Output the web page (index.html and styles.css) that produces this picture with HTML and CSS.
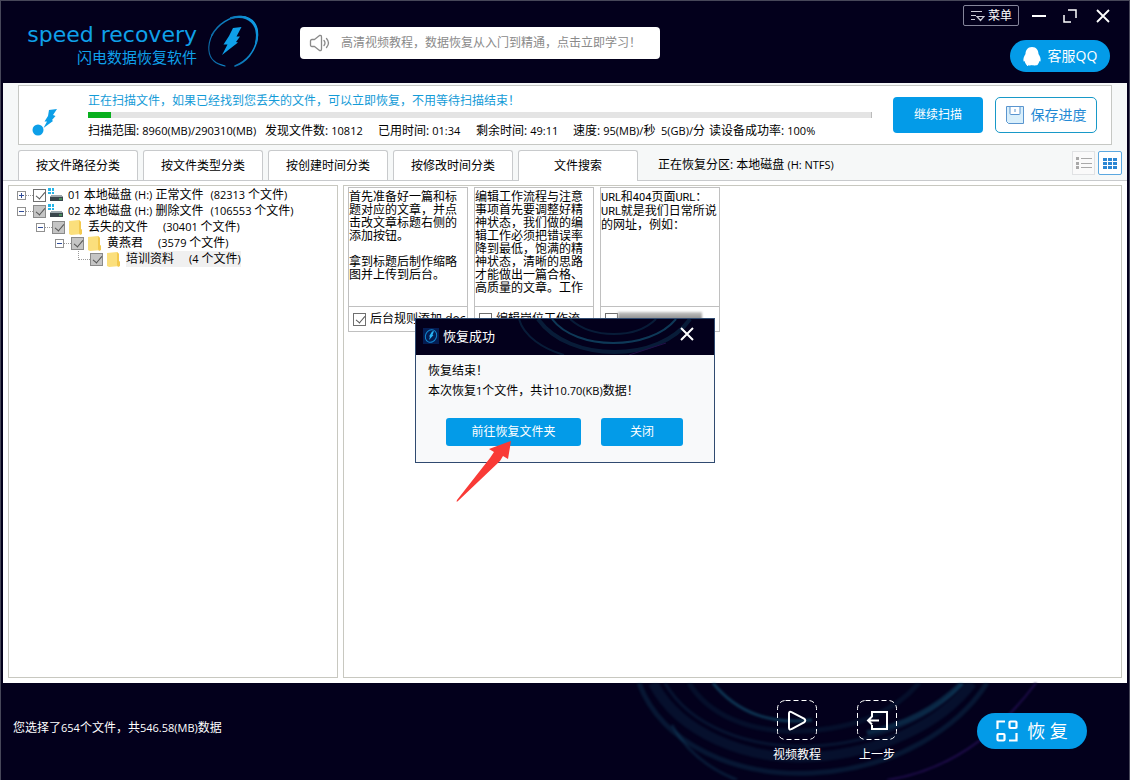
FILE: index.html
```html
<!DOCTYPE html>
<html lang="zh-CN">
<head>
<meta charset="utf-8">
<title>闪电数据恢复软件</title>
<link rel="stylesheet" href="styles.css">
</head>
<body>
<div class="window">
  <header class="header">
    <div class="brand">
      <div class="brand-text">
        <div class="brand-en">speed recovery</div>
        <div class="brand-cn">闪电数据恢复软件</div>
      </div>
      <svg class="brand-mark" width="54" height="54" viewBox="0 0 54 54">
        <defs>
          <linearGradient id="ring" x1="0" y1="0.8" x2="1" y2="0.2">
            <stop offset="0" stop-color="#0b5d96"/>
            <stop offset="1" stop-color="#0fa0ea"/>
          </linearGradient>
        </defs>
        <g fill="none" stroke="url(#ring)" stroke-linecap="round">
          <path d="M5 20C11 9 23 1.500 34 1.500C46 2 52 11 50 24C48 37 39 47 28 51" stroke-width="1.600"/>
          <path d="M24 3C32 1 40 2 45 7C50 12 51 20 49 28" stroke-width="2.200"/>
          <path d="M5 20C0 31 1 41 7 46C10 49 14 50 18 51" stroke-width="1.100"/>
        </g>
        <path d="M26 13L34.500 12L29.500 21.500H33L29 27L31 27.500L15 40L20.500 29.500H16.500L22 21Z" fill="#0fa0ea"/>
      </svg>
    </div>
    <a class="notice" href="#">
      <svg width="22" height="18" viewBox="0 0 22 18" fill="none" stroke="#8a8a8a" stroke-width="1.300" stroke-linejoin="round" stroke-linecap="round">
        <path d="M3 5.500H5.500L10.500 1.500Q12.500 1 12.500 3V15Q12.500 17 10.500 16.500L5.500 12.500H3Q1.500 12.500 1.500 11V7Q1.500 5.500 3 5.500Z"/>
        <path d="M15 6.500Q17 9 15 11.500M17.500 4.500Q21.500 9 17.500 13.500"/>
      </svg>
      <span>高清视频教程，数据恢复从入门到精通，点击立即学习！</span>
    </a>
    <div class="header-right">
      <div class="window-controls">
        <button class="menu-button" type="button">
          <svg width="15" height="12" viewBox="0 0 15 12" fill="none" stroke="#c9c9d4" stroke-width="1.200">
            <path d="M1 1.500H12M1 5.500H6M1 9.500H5M7 6.500H14L10.500 10.500Z"/>
          </svg>
          <span>菜单</span>
        </button>
        <button class="control" type="button" aria-label="最小化">
          <svg width="14" height="14" viewBox="0 0 14 14"><path d="M0 7H14" stroke="#fff" stroke-width="2"/></svg>
        </button>
        <button class="control" type="button" aria-label="最大化">
          <svg width="14" height="14" viewBox="0 0 14 14" fill="none" stroke="#fff" stroke-width="1.500"><path d="M5 1H13V9M1 6V13H8"/></svg>
        </button>
        <button class="control" type="button" aria-label="关闭窗口">
          <svg width="14" height="14" viewBox="0 0 14 14"><path d="M1 1L13 13M13 1L1 13" stroke="#fff" stroke-width="1.800"/></svg>
        </button>
      </div>
      <button class="service" type="button">
        <svg width="18" height="19" viewBox="0 0 18 19" fill="#fff"><path d="M9 0C13.500 0 15.500 3.500 15.500 7C17 9 18 12 17.500 14C17.300 15 16.500 14.500 16 14C16.300 15.500 15.500 16.500 15 17C15 19 10 18.500 9 18C8 18.500 3 19 3 17C2.500 16.500 1.700 15.500 2 14C1.500 14.500 .7 15 .5 14C0 12 1 9 2.500 7C2.500 3.500 4.500 0 9 0Z"/></svg>
        <span>客服QQ</span>
      </button>
    </div>
  </header>

  <main class="content">
    <section class="scan">
      <svg class="scan-icon" width="28" height="28" viewBox="0 0 28 28" fill="#0d9fe8">
        <circle cx="6" cy="22" r="5.500"/>
        <path d="M17 2L25 1L21 7L23.500 8L20 12L21 13L11.500 20L15 13.500H12.500L16 8Z"/>
      </svg>
      <div class="scan-info">
        <div class="scan-title">正在扫描文件，如果已经找到您丢失的文件，可以立即恢复，不用等待扫描结束！</div>
        <div class="progress"><div class="progress-fill" style="width:3%"></div></div>
        <div class="stats">
          <span>扫描范围: <span class="num">8960(MB)/290310(MB)</span></span>
          <span>发现文件数: <span class="num">10812</span></span>
          <span>已用时间: <span class="num">01:34</span></span>
          <span>剩余时间: <span class="num">49:11</span></span>
          <span>速度: <span class="num">95(MB)/</span>秒</span>
          <span><span class="num">5(GB)/</span>分</span>
          <span>读设备成功率: <span class="num">100%</span></span>
        </div>
      </div>
      <button class="scan-button" type="button">继续扫描</button>
      <button class="save-button" type="button">
        <svg width="18" height="18" viewBox="0 0 18 18" fill="#d9effb" stroke="#5a95cf"><path d="M.5 .5H17.500V17.500H2.500L.5 15.500Z"/><path d="M4 1V7.500Q4 8.500 5 8.500H13Q14 8.500 14 7.500V1" fill="#fff"/><path d="M9 3V6"/></svg>
        <span>保存进度</span>
      </button>
    </section>

    <div class="tabs-row">
      <nav class="tabs">
        <button class="tab" type="button">按文件路径分类</button>
        <button class="tab" type="button">按文件类型分类</button>
        <button class="tab" type="button">按创建时间分类</button>
        <button class="tab" type="button">按修改时间分类</button>
        <button class="tab tab-active" type="button">文件搜索</button>
      </nav>
      <div class="partition">正在恢复分区: 本地磁盘 <span class="num">(H: NTFS)</span></div>
      <div class="views">
        <button class="view" type="button" aria-label="列表视图">
          <svg width="16" height="12" viewBox="0 0 16 12" fill="#a9a9a9"><path d="M0 0H3V3H0ZM0 5H3V8H0ZM0 9H3V12H0ZM5 1H16V2H5ZM5 6H16V7H5ZM5 10H16V11H5Z"/></svg>
        </button>
        <button class="view view-active" type="button" aria-label="图标视图">
          <svg width="14" height="11" viewBox="0 0 14 11" fill="#2b86d3"><path d="M0 0H4V3H0ZM5 0H9V3H5ZM10 0H14V3H10ZM0 4H4V7H0ZM5 4H9V7H5ZM10 4H14V7H10ZM0 8H4V11H0ZM5 8H9V11H5ZM10 8H14V11H10Z"/></svg>
        </button>
      </div>
    </div>

    <div class="panes">
      <ul class="tree">
        <li class="node">
          <button class="toggle toggle-plus" type="button" aria-label="展开"></button><i class="dots"></i>
          <input class="check" type="checkbox" id="n1" checked>
          <svg class="disk" width="16" height="14" viewBox="0 0 16 14"><path d="M0 0H3V3H0ZM4 0H6V3H4ZM0 4H3V6H0ZM4 4H6V6H4Z" fill="#25b5e8"/><path d="M4 7H13L15 9V13H2V9Z" fill="#39464c"/><path d="M4 7H13L15 9H2Z" fill="#9da8ad"/><path d="M11 10.500H14V11.500H11Z" fill="#58d36b"/></svg>
          <label for="n1"><span class="num">01</span> 本地磁盘 <span class="num">(H:)</span> 正常文件<span class="count"><span class="num">(82313 </span>个文件<span class="num">)</span></span></label>
        </li>
        <li class="node">
          <button class="toggle" type="button" aria-label="折叠"></button><i class="dots"></i>
          <input class="check check-gray" type="checkbox" id="n2" checked>
          <svg class="disk" width="16" height="14" viewBox="0 0 16 14"><path d="M0 0H3V3H0ZM4 0H6V3H4ZM0 4H3V6H0ZM4 4H6V6H4Z" fill="#25b5e8"/><path d="M4 7H13L15 9V13H2V9Z" fill="#39464c"/><path d="M4 7H13L15 9H2Z" fill="#9da8ad"/><path d="M11 10.500H14V11.500H11Z" fill="#58d36b"/></svg>
          <label for="n2"><span class="num">02</span> 本地磁盘 <span class="num">(H:)</span> 删除文件<span class="count"><span class="num">(106553 </span>个文件<span class="num">)</span></span></label>
        </li>
        <li class="node level-1">
          <button class="toggle" type="button" aria-label="折叠"></button><i class="dots"></i>
          <input class="check check-gray" type="checkbox" id="n3" checked>
          <svg class="folder" width="13" height="15" viewBox="0 0 13 15"><path d="M0 1L10 0L12 2V9L13 10V14L2 15L0 14Z" fill="#fbdf7c"/><path d="M10 0L12 2V9L13 10V14L11 15L10 13Z" fill="#f3c94e"/></svg>
          <label for="n3">丢失的文件<span class="count count-wide"><span class="num">(30401 </span>个文件<span class="num">)</span></span></label>
        </li>
        <li class="node level-2">
          <button class="toggle" type="button" aria-label="折叠"></button><i class="dots"></i>
          <input class="check check-gray" type="checkbox" id="n4" checked>
          <svg class="folder" width="13" height="15" viewBox="0 0 13 15"><path d="M0 1L10 0L12 2V9L13 10V14L2 15L0 14Z" fill="#fbdf7c"/><path d="M10 0L12 2V9L13 10V14L11 15L10 13Z" fill="#f3c94e"/></svg>
          <label for="n4">黄燕君<span class="count count-wide"><span class="num">(3579 </span>个文件<span class="num">)</span></span></label>
        </li>
        <li class="node level-3">
          <i class="dots dots-corner"></i>
          <input class="check check-gray" type="checkbox" id="n5" checked>
          <svg class="folder" width="13" height="15" viewBox="0 0 13 15"><path d="M0 1L10 0L12 2V9L13 10V14L2 15L0 14Z" fill="#fbdf7c"/><path d="M10 0L12 2V9L13 10V14L11 15L10 13Z" fill="#f3c94e"/></svg>
          <label class="selected" for="n5">培训资料<span class="count count-wide"><span class="num">(4 </span>个文件<span class="num">)</span></span></label>
        </li>
      </ul>

      <div class="files">
        <article class="card">
          <div class="preview"><p>首先准备好一篇和标题对应的文章，并点击改文章标题右侧的添加按钮。</p><p>拿到标题后制作缩略图并上传到后台。</p></div>
          <div class="card-name"><input class="check" type="checkbox" id="f1" checked><label for="f1">后台规则添加.doc</label></div>
        </article>
        <article class="card">
          <div class="preview"><p>编辑工作流程与注意事项首先要调整好精神状态，我们做的编辑工作必须把错误率降到最低，饱满的精神状态，清晰的思路才能做出一篇合格、高质量的文章。工作</p></div>
          <div class="card-name"><input class="check" type="checkbox" id="f2"><label for="f2">编辑岗位工作流</label></div>
        </article>
        <article class="card">
          <div class="preview"><p><span class="num">URL</span>和<span class="num">404</span>页面<span class="num">URL</span>：<br><span class="num">URL</span>就是我们日常所说的网址，例如：</p></div>
          <div class="card-name"><input class="check" type="checkbox" id="f3" aria-label="选择文件"><span class="masked"></span></div>
        </article>
      </div>
    </div>
  </main>

  <footer class="footer">
    <svg class="swirl" width="530" height="97" viewBox="0 0 530 97" fill="none">
      <g stroke="#1c7fa0">
        <path d="M42 0C65 62 140 94 215 90C300 86 362 44 390 0" stroke-width="5" opacity=".18"/>
        <path d="M56 0C82 50 150 78 215 74C285 70 345 40 375 0" stroke-width="10" opacity=".13"/>
        <path d="M68 0C92 42 150 66 215 63C280 60 338 34 366 0" stroke-width="3" opacity=".16"/>
        <path d="M92 0C110 30 150 50 205 48C262 46 300 26 322 0" stroke-width="5" opacity=".12"/>
        <path d="M116 0C140 30 175 42 215 37" stroke-width="3" opacity=".4"/>
        <path d="M270 50C315 40 345 20 365 0" stroke-width="5" opacity=".3"/>
        <path d="M75 42C88 66 110 85 140 97" stroke-width="3" opacity=".2"/>
      </g>
      <path d="M439 0C400 52 350 88 290 97" stroke="#1e0c4a" stroke-width="2"/>
    </svg>
    <div class="selection">您选择了<span class="num">654</span>个文件，共<span class="num">546.58(MB)</span>数据</div>
    <div class="footer-actions">
      <button class="action" type="button">
        <svg width="40" height="40" viewBox="0 0 40 40" fill="none" stroke="#fff"><rect x=".5" y=".5" width="39" height="39" rx="8" stroke-dasharray="5 3"/><path d="M12 13.500Q12 11 14.500 12.200L27 18.500Q29.500 20.500 27 22.500L14.500 29Q12 30.500 12 27.500Z" stroke-width="2"/></svg>
        <span>视频教程</span>
      </button>
      <button class="action" type="button">
        <svg width="40" height="40" viewBox="0 0 40 40" fill="none" stroke="#fff"><rect x=".5" y=".5" width="39" height="39" rx="8" stroke-dasharray="5 3"/><path d="M15 17V12H30V29H15V25M11 20.500H22M15 16.500L11 20.500L15 24.500" stroke-width="2"/></svg>
        <span>上一步</span>
      </button>
      <button class="recover" type="button">
        <svg width="22" height="22" viewBox="0 0 22 22" fill="none" stroke="#fff" stroke-width="2.200"><path d="M1.500 9V1.500H9M20.500 13V20.500H13"/><rect x="13.500" y="1.500" width="7" height="6.500" rx="1"/><rect x="1.500" y="14" width="7" height="6.500" rx="1"/></svg>
        <span>恢 复</span>
      </button>
    </div>
  </footer>

  <section class="dialog" role="dialog" aria-labelledby="dialog-title">
    <div class="dialog-head">
      <svg class="dialog-swirl" width="200" height="36" viewBox="0 0 200 36" fill="none">
        <g stroke="#1c7fa0">
          <path d="M38 0C62 32 136 32 162 0" stroke-width="2" opacity=".45"/>
          <path d="M24 0C55 44 146 44 176 0" stroke-width="4" opacity=".22"/>
          <path d="M56 0C78 20 122 20 142 0" stroke-width="2" opacity=".22"/>
          <path d="M5 0C10 18 30 30 50 36" stroke-width="2" opacity=".22"/>
        </g>
        <path d="M152 24L115 36" stroke="#241049"/>
      </svg>
      <svg class="dialog-icon" width="16" height="16" viewBox="0 0 16 16"><rect width="16" height="16" fill="#041c52"/><ellipse cx="8" cy="8" rx="5.500" ry="6.500" transform="rotate(25 8 8)" fill="none" stroke="#1287cf"/><path d="M9 3.500L11 3L9.500 7H10.500L6 12L7 8.500H6Z" fill="#29b4f5"/></svg>
      <h1 id="dialog-title">恢复成功</h1>
      <button class="dialog-close" type="button" aria-label="关闭对话框">
        <svg width="14" height="14" viewBox="0 0 14 14"><path d="M1 1L13 13M13 1L1 13" stroke="#fff" stroke-width="2"/></svg>
      </button>
    </div>
    <div class="dialog-body">
      <p>恢复结束！</p>
      <p>本次恢复<span class="num">1</span>个文件，共计<span class="num">10.70(KB)</span>数据！</p>
      <div class="dialog-buttons">
        <button class="primary primary-wide" type="button">前往恢复文件夹</button>
        <button class="primary" type="button">关闭</button>
      </div>
    </div>
  </section>
  <svg class="pointer" width="56" height="62" viewBox="0 0 56 62"><path d="M55 0L52 18L47 15L44 20L2 60Q0 62 1 59L34 17L38 11L33 8Z" fill="#f93a36"/></svg>
</div>
</body>
</html>
```
FILE: styles.css
```css
* {
  box-sizing: border-box;
}

body {
  margin: 0;
  font-family: "Open Sans", "Noto Sans CJK SC", sans-serif;
  font-size: 12px;
  line-height: 16px;
  color: #000;
}

button {
  margin: 0;
  padding: 0;
  border: 0;
  background: none;
  font: inherit;
  color: inherit;
}

p,
ul {
  margin: 0;
  padding: 0;
}

svg {
  display: block;
  flex: none;
}

.num {
  font-size: 11px;
}

.window {
  position: relative;
  display: flex;
  flex-direction: column;
  min-height: 100vh;
  padding: 0 2px;
  border: 1px solid #474759;
  border-bottom: 0;
  background: #03001c;
  white-space: nowrap;
}

/* Header */

.header {
  display: flex;
  height: 82px;
}

.brand {
  display: flex;
  width: 297px;
  padding: 14px 0 0 22px;
  gap: 10px;
  color: #0fa0ea;
}

.brand-text {
  display: flex;
  flex-direction: column;
  align-items: flex-end;
  width: 172px;
  padding-top: 6px;
}

.brand-en {
  font-family: "DejaVu Sans", sans-serif;
  font-size: 22px;
  line-height: 28px;
}

.brand-cn {
  font-size: 15px;
  line-height: 16px;
}

.notice {
  display: flex;
  align-items: center;
  gap: 10px;
  width: 360px;
  height: 32px;
  margin-top: 26px;
  padding: 0 9px;
  border-radius: 4px;
  background: #fff;
  color: #8a8a8a;
  text-decoration: none;
}

.header-right {
  display: flex;
  flex-direction: column;
  align-items: flex-end;
  gap: 14px;
  margin-left: auto;
  padding: 4px 17px 0 0;
}

.window-controls {
  display: flex;
  align-items: center;
  gap: 17px;
}

.menu-button {
  display: flex;
  align-items: center;
  justify-content: center;
  gap: 3px;
  width: 56px;
  height: 21px;
  margin-right: -4px;
  border: 1px solid #85859a;
  border-radius: 2px;
  color: #fff;
}

.control:last-child {
  margin-left: 2px;
}

.service {
  display: flex;
  align-items: center;
  justify-content: center;
  gap: 7px;
  width: 100px;
  height: 32px;
  border-radius: 16px;
  background: #039be8;
  color: #fff;
  font-size: 14px;
}

/* Scan status */

.content {
  display: flex;
  flex: 1;
  flex-direction: column;
  background: #f6f8f8;
}

.scan {
  display: flex;
  align-items: center;
  height: 60px;
  margin: 2px 15px 0;
  padding: 0 14px;
  border: 1px solid #c6c8c4;
  background: #fff;
}

.scan-icon {
  margin: 14px 28px 0 -1px;
}

.scan-info {
  flex: 1;
  margin-right: 21px;
  padding-top: 2px;
}

.scan-title {
  color: #149bd7;
}

.progress {
  height: 6px;
  margin: 3px 0 5px;
  border-right: 1px solid #bbb;
  background: #e4e4e4;
}

.progress-fill {
  height: 100%;
  background: #08b01e;
}

.stats {
  display: grid;
  grid-template-columns: 177px 113px 98px 97px 88px 48px auto;
}

.scan-button {
  width: 90px;
  height: 36px;
  margin-right: 12px;
  border-radius: 4px;
  background: #039be8;
  color: #fff;
}

.save-button {
  display: flex;
  align-items: center;
  justify-content: center;
  gap: 7px;
  width: 102px;
  height: 36px;
  border: 1px solid #1899c8;
  border-radius: 5px;
  background: #fff;
  color: #2389d4;
  font-size: 14px;
}

/* Tabs */

.tabs-row {
  display: flex;
  align-items: flex-end;
  height: 36px;
  padding: 0 5px 0 15px;
  border-bottom: 1px solid #c8cacc;
}

.tabs {
  display: flex;
  gap: 5px;
}

.tab {
  width: 120px;
  height: 30px;
  border: 1px solid #c8cacc;
  border-bottom: 0;
  border-radius: 3px 3px 0 0;
  background: #fff;
}

.tab-active {
  height: 31px;
  margin-bottom: -1px;
}

.partition {
  padding: 0 0 7px 20px;
}

.views {
  display: flex;
  gap: 3px;
  margin-left: auto;
  padding-bottom: 5px;
}

.view {
  display: flex;
  align-items: center;
  justify-content: center;
  width: 23px;
  height: 24px;
  border: 1px solid #e0e2e4;
  background: #fafafa;
}

.view-active {
  width: 24px;
  border-color: #5ba8e0;
  border-radius: 2px;
  background: #fff;
}

/* Panes */

.panes {
  display: flex;
  flex: 1;
  gap: 5px;
  padding: 4px 5px 5px;
  background: #fff;
}

.tree,
.files {
  border: 1px solid #c8c8c0;
}

.tree {
  width: 330px;
  padding: 1px 8px;
  list-style: none;
}

.node {
  display: flex;
  align-items: center;
  height: 16px;
}

.level-1 {
  padding-left: 19px;
}

.level-2 {
  padding-left: 38px;
}

.level-3 {
  padding-left: 61px;
}

.toggle {
  width: 9px;
  height: 9px;
  border: 1px solid #909090;
  background: linear-gradient(#304c98, #304c98) center / 5px 1px no-repeat;
}

.toggle-plus {
  background:
    linear-gradient(#304c98, #304c98) center / 5px 1px no-repeat,
    linear-gradient(#304c98, #304c98) center / 1px 5px no-repeat;
}

.dots {
  width: 7px;
  border-top: 1px dotted #999;
}

.dots-corner {
  align-self: flex-start;
  width: 12px;
  height: 9px;
  border-top: 0;
  border-bottom: 1px dotted #999;
  border-left: 1px dotted #999;
}

.check {
  flex: none;
  width: 13px;
  height: 13px;
  margin: 0;
  border: 1px solid #707070;
  background: #fff;
  appearance: none;
}

.check:checked::before {
  content: "";
  display: block;
  width: 4px;
  height: 8px;
  margin: 0 0 0 4px;
  border: solid #555;
  border-width: 0 1px 1px 0;
  transform: rotate(40deg);
}

.check-gray {
  border-color: #8a8a8a;
  background: #c5c5c5;
}

.disk {
  margin: 0 4px 0 2px;
}

.folder {
  margin: 0 6px 0 4px;
}

.count {
  padding-left: 7px;
}

.count-wide {
  padding-left: 15px;
}

.selected {
  background: #f0f0f0;
}

.files {
  display: flex;
  flex: 1;
  align-items: flex-start;
  gap: 6px;
  padding: 1px 4px;
}

.card {
  width: 120px;
  border: 1px solid #c0c0c0;
}

.preview {
  height: 119px;
  padding-top: 2px;
  overflow: hidden;
  border-bottom: 1px solid #c0c0c0;
  line-height: 13px;
  white-space: normal;
}

.preview p {
  margin-bottom: 13px;
  padding-right: 9px;
}

.preview .num {
  font-family: Roboto, sans-serif;
}

.card:last-child p {
  padding-right: 0;
}

.card-name {
  display: flex;
  align-items: center;
  gap: 4px;
  height: 24px;
  padding-left: 4px;
  overflow: hidden;
}

.masked {
  width: 84px;
  height: 14px;
  margin-left: -4px;
  background: linear-gradient(#c5c5c5, #555);
  filter: blur(1px);
}

/* Footer */

.footer {
  position: relative;
  display: flex;
  align-items: center;
  justify-content: space-between;
  height: 97px;
  padding: 0 40px 0 10px;
  color: #fff;
}

.swirl {
  position: absolute;
  top: 0;
  right: 0;
  filter: blur(1px);
}

.selection {
  margin-top: -7px;
}

.footer-actions {
  position: relative;
  display: flex;
  align-items: center;
}

.action {
  display: flex;
  flex-direction: column;
  align-items: center;
  gap: 7px;
  width: 80px;
}

.recover {
  display: flex;
  align-items: center;
  justify-content: center;
  gap: 9px;
  width: 110px;
  height: 36px;
  margin: -2px 0 0 60px;
  border-radius: 18px;
  background: #039be8;
  font-size: 18px;
}

/* Dialog */

.dialog {
  position: absolute;
  top: 317px;
  left: 414px;
  width: 300px;
  border: 1px solid #304a70;
  background: #f8f9fa;
}

.dialog-head {
  position: relative;
  display: flex;
  align-items: center;
  gap: 4px;
  height: 36px;
  padding: 0 20px 2px 7px;
  background: #03001c;
  color: #fff;
}

.dialog-head h1 {
  position: relative;
  margin: 0;
  font-size: 13px;
  font-weight: 400;
}

.dialog-swirl {
  position: absolute;
  top: 0;
  right: 0;
  width: 200px;
}

.dialog-close {
  position: relative;
  margin: -4px 0 0 auto;
}

.dialog-body {
  padding: 6px 12px 16px;
  line-height: 20px;
}

.dialog-buttons {
  display: flex;
  gap: 20px;
  padding: 17px 0 0 18px;
}

.primary {
  width: 82px;
  height: 28px;
  border-radius: 3px;
  background: #039be8;
  color: #fff;
}

.primary-wide {
  width: 135px;
}

.pointer {
  position: absolute;
  top: 440px;
  left: 455px;
}
```
